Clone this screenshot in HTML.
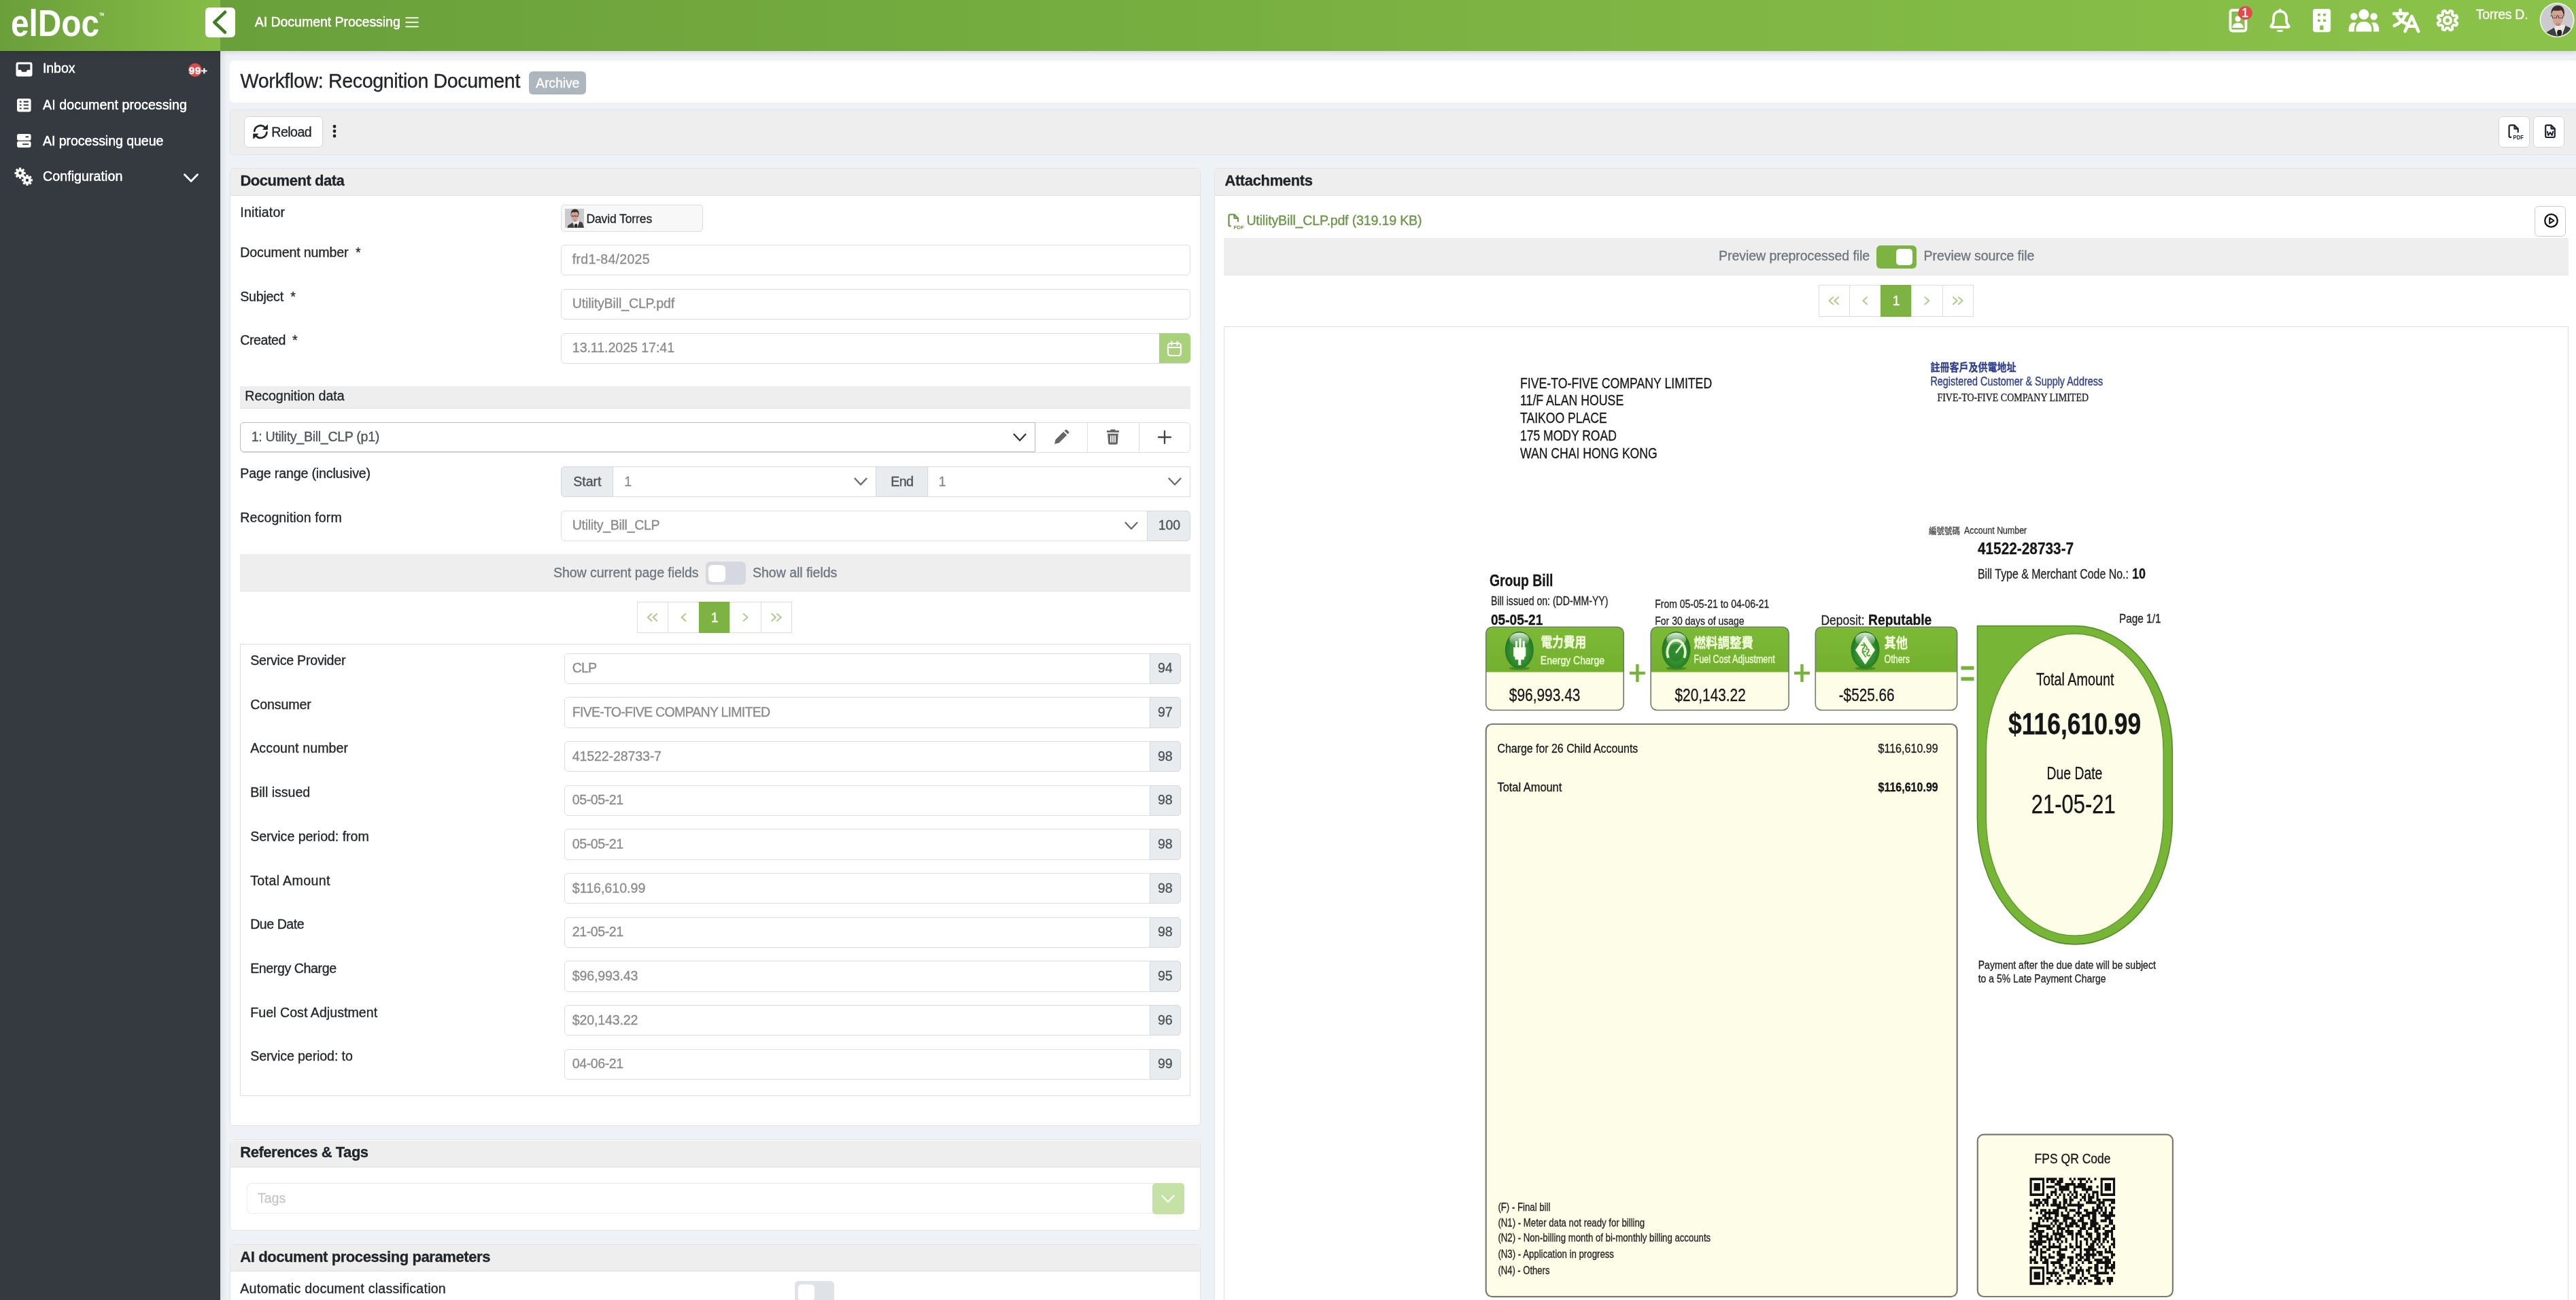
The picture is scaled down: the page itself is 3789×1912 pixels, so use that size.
<!DOCTYPE html>
<html lang="en"><head><meta charset="utf-8"><title>elDoc - Workflow: Recognition Document</title>
<style>
*{box-sizing:border-box;margin:0;padding:0}
html,body{width:3789px;height:1912px;overflow:hidden}
body{background:#eef2f7;will-change:transform;font-family:"Liberation Sans",sans-serif;color:#212529;position:relative}
div,span.t,span.lg,svg.a{position:absolute}
.t,.lg{white-space:nowrap;line-height:1}
.t{-webkit-text-stroke:.3px}
.card{background:#fff;border:1px solid #dfe3e8;border-radius:6px}
.ch{background:#eee;border-bottom:1px solid #ddd;border-radius:5px 5px 0 0}
.in{background:#fff;border:1px solid #ddd;border-radius:6px}
.ad{background:#e9ecef;border:1px solid #d4d8dc}
.bar{background:#eee;border-bottom:1px solid #e2e2e2}
.btn{background:#fff;border:1px solid #d5d5d5;border-radius:6px}
.pg{background:#fff;border:1px solid #ddd}
</style></head><body>

<div style="left:0.0px;top:75.0px;width:324.0px;height:1837.0px;background:#343a40;box-shadow:3px 0 8px rgba(0,0,0,.10)"></div>
<span class="t" id="t0" style="left:63.0px;top:91.3px;font-size:19.6px;color:#fff;letter-spacing:-0.108px;text-shadow:0 0 .6px #fff;">Inbox</span>
<span class="t" id="t1" style="left:63.0px;top:144.8px;font-size:19.6px;color:#fff;letter-spacing:0.082px;text-shadow:0 0 .6px #fff;">AI document processing</span>
<span class="t" id="t2" style="left:63.0px;top:197.6px;font-size:19.6px;color:#fff;letter-spacing:-0.071px;text-shadow:0 0 .6px #fff;">AI processing queue</span>
<span class="t" id="t3" style="left:63.0px;top:249.9px;font-size:19.6px;color:#fff;letter-spacing:0.064px;text-shadow:0 0 .6px #fff;">Configuration</span>
<svg class="a" style="left:23px;top:91px" width="25" height="22" viewBox="0 0 25 22"><path d="M3.5 0.5h18a3 3 0 0 1 3 3v15a3 3 0 0 1-3 3h-18a3 3 0 0 1-3-3v-15a3 3 0 0 1 3-3zM3.6 3.6v8.2h4.2l1.6 3h6.2l1.6-3h4.2V3.6z" fill="#fff" fill-rule="evenodd"/></svg>
<div style="left:276.5px;top:93.1px;width:20.0px;height:20.0px;background:#dc4c4c;border-radius:10px"></div>
<span class="t" id="t4" style="left:277.7px;top:96.2px;font-size:15.5px;font-weight:700;color:#fff;letter-spacing:0.468px;">99+</span>
<svg class="a" style="left:24.800px;top:145px" width="21" height="20" viewBox="0 0 21 20"><path d="M3 0h14.600a3 3 0 0 1 3 3v13.400a3 3 0 0 1-3 3H3a3 3 0 0 1-3-3V3a3 3 0 0 1 3-3zM3.700 3.600v2.100h2.900V3.600zm6 0v2.100h7.300V3.600zM3.700 8.500v2.100h2.900V8.500zm6 0v2.100h7.300V8.500zM3.700 13.500v2.100h2.900v-2.100zm6 0v2.100h7.300v-2.100z" fill="#fff" fill-rule="evenodd"/></svg>
<svg class="a" style="left:24.800px;top:196.800px" width="21" height="20" viewBox="0 0 21 20"><path d="M2.800 0h15a2.800 2.800 0 0 1 2.800 2.800v3.900a2.800 2.800 0 0 1-2.800 2.800h-15A2.800 2.800 0 0 1 0 6.700V2.800A2.800 2.800 0 0 1 2.800 0zM12.600 3.200v2.100H17V3.200zM2.800 10.800h15a2.800 2.800 0 0 1 2.800 2.800v3.500a2.800 2.800 0 0 1-2.800 2.800h-15A2.800 2.800 0 0 1 0 17.100v-3.500a2.800 2.800 0 0 1 2.800-2.800zM8.200 14.300V16H17v-1.700z" fill="#fff" fill-rule="evenodd"/></svg>
<svg class="a" style="left:20.800px;top:246px" width="28.500" height="28.500" viewBox="0 0 30 30"><g fill="#fff"><circle cx="9" cy="9" r="6.2"/><circle cx="20" cy="20" r="6.2"/><g stroke="#fff" stroke-width="3.4" stroke-linecap="butt"><path d="M9 0.500v17M0.500 9h17M3 3l12 12M15 3L3 15"/><path d="M20 11.500v17M11.500 20h17M14 14l12 12M26 14L14 26"/></g></g><circle cx="9" cy="9" r="2.400" fill="#343a40"/><circle cx="20" cy="20" r="2.400" fill="#343a40"/></svg>
<svg class="a" style="left:270px;top:255px" width="22" height="14" viewBox="0 0 22 14"><path d="M1.500 1.800L11 11.500 20.500 1.800" fill="none" stroke="#fff" stroke-width="2.800" stroke-linecap="round" stroke-linejoin="round"/></svg>
<div style="left:0.0px;top:0.0px;width:3789.0px;height:75.0px;background:linear-gradient(90deg,#6aa03a 324px,#8bc34a 3789px);box-shadow:0 2px 7px rgba(0,0,0,.13)"></div>
<div style="left:0.0px;top:0.0px;width:324.0px;height:75.0px;background:linear-gradient(90deg,#6a9f3a,#86bd47)"></div>
<span class="lg" style="left:15.5px;top:7.2px;font-size:55px;font-weight:700;color:#fff;transform:scaleX(.868);transform-origin:0 0">elDoc</span>
<span class="t" id="t5" style="left:146.5px;top:19.7px;font-size:4.5px;color:#e6f5d0;">TM</span>
<div style="left:302.0px;top:11.0px;width:44.0px;height:44.0px;background:#fff;border-radius:6px"></div>
<svg class="a" style="left:302px;top:11px" width="44" height="44" viewBox="0 0 44 44"><path d="M29 6.800L13.300 21.800 29 36.500" fill="none" stroke="#3f7d22" stroke-width="4.600" stroke-linecap="round" stroke-linejoin="round"/></svg>
<span class="t" id="t6" style="left:374.7px;top:23.1px;font-size:19.6px;color:#fff;letter-spacing:-0.070px;text-shadow:0 0 .5px #fff;">AI Document Processing</span>
<svg class="a" style="left:596px;top:24px" width="20" height="18" viewBox="0 0 20 18"><path d="M1.200 2.300h17.600M1.200 8.800h17.600M1.200 15.300h17.600" stroke="#f4ffe4" stroke-width="2" stroke-linecap="round"/></svg>
<svg class="a" style="left:3277px;top:12px" width="30" height="37" viewBox="0 0 30 37"><rect x="3.500" y="3" width="23" height="30.500" rx="3.200" fill="none" stroke="#fff" stroke-width="3.800"/><circle cx="14.700" cy="15.800" r="4.200" fill="#fff"/><path d="M6.500 29c0-4.800 3.400-7.300 8.200-7.300s8.200 2.500 8.200 7.300z" fill="#fff"/></svg>
<div style="left:3292.4px;top:8.6px;width:20.2px;height:20.2px;background:#e04a4a;border-radius:10.100px"></div>
<span class="t" id="t7" style="left:3297.3px;top:10.0px;font-size:18px;color:#fff;">1</span>
<svg class="a" style="left:3337px;top:12px" width="34" height="37" viewBox="0 0 34 37"><path d="M16.600 4.600c-6 0-9.600 4.400-9.600 10.500v4.500c0 2.500-1.300 4.300-3.300 6.300-.8.800-.3 2 .9 2h24c1.200 0 1.700-1.200.9-2-2-2-3.300-3.800-3.300-6.300v-4.500c0-6.100-3.600-10.500-9.600-10.500z" fill="none" stroke="#fff" stroke-width="3.600" stroke-linejoin="round"/><path d="M11.800 32.200h9.600a4.800 2.900 0 0 1-9.600 0z" fill="#fff"/><rect x="14.600" y="1" width="4" height="4.500" rx="2" fill="#fff"/></svg>
<svg class="a" style="left:3402.300px;top:13.100px" width="27" height="35" viewBox="0 0 27 35"><path d="M4 0h18.200a4 4 0 0 1 4 4v26.300a4 4 0 0 1-4 4H4a4 4 0 0 1-4-4V4a4 4 0 0 1 4-4zM7.100 7.100v3.500h3.600V7.100zm8 0v3.500h3.800V7.100zM7.100 15.400v3.600h3.600v-3.600zm8 0v3.600h3.800v-3.600zM10.200 31v-4.300a2.700 2.700 0 0 1 5.400 0V31z" fill="#fff" fill-rule="evenodd"/></svg>
<svg class="a" style="left:3454px;top:13px" width="46" height="34" viewBox="0 0 46 34"><g fill="#fff"><circle cx="22.900" cy="8.200" r="7.600"/><circle cx="8.300" cy="11.200" r="5.200"/><circle cx="37.600" cy="11.200" r="5.200"/><path d="M11.400 33.400v-3c0-7 4.800-11.600 11.500-11.600s11.500 4.600 11.500 11.600v3z"/><path d="M.7 33.400v-3.800c0-5.500 3.300-9.600 7.800-9.600 1.200 0 2.300.3 3.300.8-2 2.500-3 5.600-3 9.400v3.200zM45.200 33.400v-3.800c0-5.500-3.300-9.600-7.800-9.600-1.200 0-2.300.3-3.300.8 2 2.500 3 5.600 3 9.400v3.200z"/></g></svg>
<svg class="a" style="left:3518px;top:12px" width="42" height="37" viewBox="0 0 42 37"><g fill="none" stroke="#fff" stroke-width="4.700" stroke-linecap="round" stroke-linejoin="round"><path d="M3 8.100h20M12.600 2.800v5M20.100 10.100C17 17 11 23 3.800 25.800M7.900 11.700c3 5 8 9 14.200 11.500"/><path d="M19.600 34l9.800-22 9.800 22M23.500 26.600h12"/></g></svg>
<svg class="a" style="left:3582.400px;top:12px" width="36" height="36" viewBox="0 0 36 36"><g fill="none" stroke="#fff" stroke-linejoin="round"><path d="M31.9 23.7L31.6 24.3L31.4 24.8L31.1 25.3L30.0 25.3L28.8 25.2L27.7 25.0L26.6 24.8L26.4 25.1L26.1 25.5L25.8 25.8L25.5 26.1L25.1 26.4L24.8 26.6L25.0 27.7L25.2 28.8L25.3 30.0L25.3 31.1L24.8 31.4L24.3 31.6L23.7 31.9L23.2 32.1L22.6 32.3L22.1 32.4L21.3 31.7L20.5 30.8L19.9 29.8L19.3 28.9L18.9 29.0L18.4 29.0L18.0 29.0L17.6 29.0L17.1 29.0L16.7 28.9L16.1 29.8L15.5 30.8L14.7 31.7L13.9 32.4L13.4 32.3L12.8 32.1L12.3 31.9L11.7 31.6L11.2 31.4L10.7 31.1L10.7 30.0L10.8 28.8L11.0 27.7L11.2 26.6L10.9 26.4L10.5 26.1L10.2 25.8L9.9 25.5L9.6 25.1L9.4 24.8L8.3 25.0L7.2 25.2L6.0 25.3L4.9 25.3L4.6 24.8L4.4 24.3L4.1 23.7L3.9 23.2L3.7 22.6L3.6 22.1L4.3 21.3L5.2 20.5L6.2 19.9L7.1 19.3L7.0 18.9L7.0 18.4L7.0 18.0L7.0 17.6L7.0 17.1L7.1 16.7L6.2 16.1L5.2 15.5L4.3 14.7L3.6 13.9L3.7 13.4L3.9 12.8L4.1 12.3L4.4 11.7L4.6 11.2L4.9 10.7L6.0 10.7L7.2 10.8L8.3 11.0L9.4 11.2L9.6 10.9L9.9 10.5L10.2 10.2L10.5 9.9L10.9 9.6L11.2 9.4L11.0 8.3L10.8 7.2L10.7 6.0L10.7 4.9L11.2 4.6L11.7 4.4L12.3 4.1L12.8 3.9L13.4 3.7L13.9 3.6L14.7 4.3L15.5 5.2L16.1 6.2L16.7 7.1L17.1 7.0L17.6 7.0L18.0 7.0L18.4 7.0L18.9 7.0L19.3 7.1L19.9 6.2L20.5 5.2L21.3 4.3L22.1 3.6L22.6 3.7L23.2 3.9L23.7 4.1L24.3 4.4L24.8 4.6L25.3 4.9L25.3 6.0L25.2 7.2L25.0 8.3L24.8 9.4L25.1 9.6L25.5 9.9L25.8 10.2L26.1 10.5L26.4 10.9L26.6 11.2L27.7 11.0L28.8 10.8L30.0 10.7L31.1 10.7L31.4 11.2L31.6 11.7L31.9 12.3L32.1 12.8L32.3 13.4L32.4 13.9L31.7 14.7L30.8 15.5L29.8 16.1L28.9 16.7L29.0 17.1L29.0 17.6L29.0 18.0L29.0 18.4L29.0 18.9L28.9 19.3L29.8 19.9L30.8 20.5L31.7 21.3L32.4 22.1L32.3 22.6L32.1 23.2Z" stroke-width="3.800"/><circle cx="18" cy="18" r="5" stroke-width="4.200"/></g></svg>
<span class="t" id="t8" style="left:3641.7px;top:11.5px;font-size:19.6px;color:#fff;letter-spacing:-0.320px;">Torres D.</span>
<svg class="a" style="left:3735px;top:3px" width="52" height="53" viewBox="0 0 52 53"><defs><clipPath id="avc"><circle cx="26.100" cy="26.500" r="23.900"/></clipPath></defs><circle cx="26.100" cy="26.500" r="25.500" fill="#eefbe2"/><g clip-path="url(#avc)"><rect width="52" height="53" fill="#cbcbcf"/><path d="M8 53L10.500 44.500 22 37.500l5.500 3 10.500-6 7.500 3.500L50 53z" fill="#3f3f42"/><path d="M21.800 37.600L24 35l13-1.500 1.500 1.500L33 50h-7z" fill="#e9e8e4"/><path d="M27.500 41h4.500l1.300 3-1.300 9h-5l-1-9z" fill="#242426"/><path d="M18.500 17c0-6 4-9 9-9s8.500 3.500 8.500 9.500c0 3-.5 6-1.500 9-1.200 4-4 8.500-7.500 8.500-3 0-6-3.500-7.300-8-.8-3-1.200-6-1.200-10z" fill="#d3a493"/><path d="M24 30.500c2 1.500 5 1.500 7.500 0l-1 4.500h-5z" fill="#b98777"/><path d="M17.500 18.500c-1-8 3.500-13.500 9.500-13.500 6.500 0 10.500 4.500 10 12.500l-1 3c-.5-4.500-2-7.500-4-8.500-3.500 1-8 1-11.500.5-1.500 1.500-2.500 3.500-2.500 7z" fill="#38302d"/><path d="M16.500 19.700h20v1.300h-20zM19 20h7v3.800h-7zm9 0h7v3.800h-7z" fill="#2c2624" fill-opacity=".85" fill-rule="evenodd"/><path d="M20 21h5v2h-5zm9 0h5v2h-5z" fill="#c79c8c"/></g></svg>
<div style="left:338.2px;top:89.3px;width:3470.0px;height:61.6px;background:#fff;border-radius:7px"></div>
<span class="t" id="t9" style="left:353.6px;top:104.8px;font-size:28.6px;letter-spacing:-0.361px;">Workflow: Recognition Document</span>
<div style="left:778.0px;top:104.9px;width:83.7px;height:34.0px;background:#adb5bd;border-radius:6px"></div>
<span class="t" id="t10" style="left:788.1px;top:112.9px;font-size:19.6px;color:#fff;letter-spacing:-0.163px;">Archive</span>
<div style="left:338.0px;top:161.0px;width:3470.0px;height:66.5px;background:#eee;border:1px solid #e2e5e8;border-radius:6px"></div>
<div class="btn" style="left:359.0px;top:170.8px;width:116.0px;height:46.2px;"></div>
<svg class="a" style="left:371px;top:181.500px" width="24" height="24" viewBox="0 0 24 24"><g fill="none" stroke="#212529" stroke-width="2.700" stroke-linecap="round"><path d="M3.200 11A9.100 9.100 0 0 1 18.700 5.400"/><path d="M21.400 12.600A9.100 9.100 0 0 1 5.900 18.200"/></g><path d="M22.600 1.500v7h-7zM1.700 22.100v-7.200h7.200z" fill="#212529" stroke="#212529" stroke-width=".8" stroke-linejoin="round"/></svg>
<span class="t" id="t11" style="left:399.3px;top:185.1px;font-size:19.6px;letter-spacing:-0.549px;">Reload</span>
<svg class="a" style="left:487px;top:183px" width="10" height="20" viewBox="0 0 10 20"><g fill="#212529"><circle cx="5" cy="3" r="2.400"/><circle cx="5" cy="10" r="2.400"/><circle cx="5" cy="17" r="2.400"/></g></svg>
<div class="btn" style="left:3675.3px;top:171.0px;width:45.8px;height:46.0px;"></div>
<div class="btn" style="left:3726.2px;top:171.0px;width:46.0px;height:46.0px;"></div>
<svg class="a" style="left:3687px;top:181px" width="26" height="26" viewBox="0 0 26 26"><path d="M6.300 20.800h-1a1.700 1.700 0 0 1-1.700-1.700V4.900A1.700 1.700 0 0 1 5.300 3.200h6.200l5.200 5.200v4.800" fill="none" stroke="#1c2430" stroke-width="2.200" stroke-linejoin="round" stroke-linecap="round"/><path d="M11.500 3.200v5.200h5.200" fill="none" stroke="#1c2430" stroke-width="2.200" stroke-linejoin="round"/><text x="9.500" y="24.200" font-family="Liberation Sans,sans-serif" font-weight="700" font-size="8.800" fill="#1c2430" textLength="15.500" lengthAdjust="spacingAndGlyphs">PDF</text></svg>
<svg class="a" style="left:3738px;top:181px" width="24" height="26" viewBox="0 0 24 26"><path d="M8.200 3.200h6.400l5.200 5.200v10.600a2 2 0 0 1-2 2H8.200a2 2 0 0 1-2-2V5.200a2 2 0 0 1 2-2z" fill="none" stroke="#1c2430" stroke-width="2.200" stroke-linejoin="round"/><path d="M14.600 3.200v5.200h5.200" fill="none" stroke="#1c2430" stroke-width="2.200" stroke-linejoin="round"/><path d="M8.800 12.500l1.500 5.500 2.700-4.300 2.700 4.300 1.500-5.500" fill="none" stroke="#1c2430" stroke-width="2" stroke-linejoin="round" stroke-linecap="round"/></svg>
<div class="card" style="left:337.5px;top:246.9px;width:1428.8px;height:1409.4px;"></div>
<div class="ch" style="left:339.0px;top:248.4px;width:1425.8px;height:39.5px;"></div>
<span class="t" id="t12" style="left:353.4px;top:255.1px;font-size:22px;font-weight:700;letter-spacing:-0.456px;">Document data</span>
<span class="t" id="t13" style="left:353.3px;top:302.6px;font-size:19.6px;letter-spacing:0.193px;">Initiator</span>
<div style="left:825.2px;top:301.3px;width:209.3px;height:39.3px;background:#f8f8f8;border:1px solid #ddd;border-radius:5px"></div>
<svg class="a" style="left:831.100px;top:307.200px" width="27.800" height="27.500" viewBox="3 4 46 45.500" preserveAspectRatio="xMidYMid slice"><rect width="52" height="53" fill="#cbcbcf"/><path d="M8 53L10.500 44.500 22 37.500l5.500 3 10.500-6 7.500 3.500L50 53z" fill="#3f3f42"/><path d="M21.800 37.600L24 35l13-1.500 1.500 1.500L33 50h-7z" fill="#e9e8e4"/><path d="M27.500 41h4.500l1.300 3-1.300 9h-5l-1-9z" fill="#242426"/><path d="M18.500 17c0-6 4-9 9-9s8.500 3.500 8.500 9.500c0 3-.5 6-1.500 9-1.200 4-4 8.500-7.500 8.500-3 0-6-3.500-7.300-8-.8-3-1.200-6-1.200-10z" fill="#d3a493"/><path d="M24 30.500c2 1.500 5 1.500 7.500 0l-1 4.500h-5z" fill="#b98777"/><path d="M17.500 18.500c-1-8 3.500-13.500 9.500-13.500 6.500 0 10.500 4.500 10 12.500l-1 3c-.5-4.500-2-7.500-4-8.500-3.500 1-8 1-11.500.5-1.500 1.500-2.500 3.500-2.500 7z" fill="#38302d"/><path d="M16.500 19.700h20v1.300h-20zM19 20h7v3.800h-7zm9 0h7v3.800h-7z" fill="#2c2624" fill-opacity=".85" fill-rule="evenodd"/><path d="M20 21h5v2h-5zm9 0h5v2h-5z" fill="#c79c8c"/></svg>
<span class="t" id="t14" style="left:862.4px;top:314.3px;font-size:17.5px;letter-spacing:-0.102px;">David Torres</span>
<span class="t" id="t15" style="left:353.3px;top:361.5px;font-size:19.6px;letter-spacing:-0.139px;">Document number&nbsp;&nbsp;*</span>
<div class="in" style="left:824.7px;top:359.9px;width:926.5px;height:45.3px;"></div>
<span class="t" id="t16" style="left:841.8px;top:372.4px;font-size:19.6px;color:#8a8a8a;letter-spacing:0.248px;">frd1-84/2025</span>
<span class="t" id="t17" style="left:353.3px;top:426.5px;font-size:19.6px;letter-spacing:-0.258px;">Subject&nbsp;&nbsp;*</span>
<div class="in" style="left:824.7px;top:424.9px;width:926.5px;height:45.3px;"></div>
<span class="t" id="t18" style="left:841.8px;top:437.4px;font-size:19.6px;color:#8a8a8a;letter-spacing:-0.153px;">UtilityBill_CLP.pdf</span>
<span class="t" id="t19" style="left:353.3px;top:491.3px;font-size:19.6px;letter-spacing:-0.443px;">Created&nbsp;&nbsp;*</span>
<div class="in" style="left:824.7px;top:489.7px;width:926.5px;height:45.3px;"></div>
<span class="t" id="t20" style="left:841.8px;top:502.2px;font-size:19.6px;color:#8a8a8a;letter-spacing:-0.056px;">13.11.2025 17:41</span>
<div style="left:1704.5px;top:490.2px;width:46.2px;height:44.3px;background:#a9d17c;border-radius:0 6px 6px 0"></div>
<svg class="a" style="left:1716px;top:501px" width="23" height="24" viewBox="0 0 23 24"><g fill="none" stroke="#fff" stroke-width="2.200" stroke-linecap="round" stroke-linejoin="round"><rect x="2" y="4" width="19" height="18" rx="3.500"/><path d="M2.500 10h18M7.300 1.500v5M15.700 1.500v5"/></g></svg>
<div class="bar" style="left:353.2px;top:568.1px;width:1397.5px;height:32.6px;"></div>
<span class="t" id="t21" style="left:360.3px;top:573.0px;font-size:19.6px;letter-spacing:-0.054px;">Recognition data</span>
<div class="in" style="left:352.7px;top:620.8px;width:1398.5px;height:45.2px;border-color:#ddd"></div>
<div style="left:353.2px;top:621.3px;width:1169.7px;height:44.2px;border:1px solid #bdbdbd;border-radius:6px 0 0 6px;background:#fff"></div>
<span class="t" id="t22" style="left:369.7px;top:633.2px;font-size:19.6px;color:#4d525a;letter-spacing:-0.307px;">1: Utility_Bill_CLP (p1)</span>
<svg class="a" style="left:1489.5px;top:636.8px" width="20" height="13" viewBox="0 0 20 13"><path d="M1.500 1.800L10 10.800 18.500 1.800" fill="none" stroke="#333" stroke-width="2.300" stroke-linecap="round" stroke-linejoin="round"/></svg>
<div style="left:1598.9px;top:621.3px;width:1.0px;height:44.2px;background:#ddd"></div>
<div style="left:1675.0px;top:621.3px;width:1.0px;height:44.2px;background:#ddd"></div>
<svg class="a" style="left:1549px;top:631px" width="24" height="24" viewBox="0 0 24 24"><path d="M2 22l1.600-6.500L15.200 3.900l5 5L8.600 20.500zM16.600 2.500l1.100-1.100a2 2 0 0 1 2.800 0l2.200 2.200a2 2 0 0 1 0 2.800l-1.100 1.100z" fill="#666"/></svg>
<svg class="a" style="left:1627px;top:631px" width="20" height="23" viewBox="0 0 20 23"><path d="M7 0.500h6l1 1.800h5v2.700H1V2.300h5zM2.200 6.800h15.600l-.9 14.200a2 2 0 0 1-2 1.800H5.100a2 2 0 0 1-2-1.800zM6 9.500v10.300h1.800V9.500zm3.100 0v10.300h1.800V9.500zm3.100 0v10.300h1.800V9.500z" fill="#666" fill-rule="evenodd"/></svg>
<svg class="a" style="left:1703px;top:633px" width="20" height="20" viewBox="0 0 20 20"><path d="M10 1v18M1 10h18" stroke="#444" stroke-width="2.300" stroke-linecap="round"/></svg>
<span class="t" id="t23" style="left:353.3px;top:687.4px;font-size:19.6px;letter-spacing:-0.148px;">Page range (inclusive)</span>
<div class="in" style="left:824.7px;top:685.8px;width:926.5px;height:45.2px;border-radius:6px 0 0 6px"></div>
<div class="ad" style="left:824.7px;top:685.8px;width:77.4px;height:45.3px;border-radius:6px 0 0 6px"></div>
<span class="t" id="t24" style="left:843.2px;top:698.5px;font-size:19.6px;color:#495057;">Start</span>
<span class="t" id="t25" style="left:918.2px;top:698.5px;font-size:19.6px;color:#8a8a8a;">1</span>
<svg class="a" style="left:1255.5px;top:702.0px" width="20" height="13" viewBox="0 0 20 13"><path d="M1.500 1.800L10 10.800 18.500 1.800" fill="none" stroke="#6a6a6a" stroke-width="2.300" stroke-linecap="round" stroke-linejoin="round"/></svg>
<div class="ad" style="left:1287.8px;top:685.8px;width:77.1px;height:45.3px;"></div>
<span class="t" id="t26" style="left:1310.3px;top:698.5px;font-size:19.6px;color:#495057;letter-spacing:-0.625px;">End</span>
<span class="t" id="t27" style="left:1380.6px;top:698.5px;font-size:19.6px;color:#8a8a8a;">1</span>
<svg class="a" style="left:1717.5px;top:702.0px" width="20" height="13" viewBox="0 0 20 13"><path d="M1.500 1.800L10 10.800 18.500 1.800" fill="none" stroke="#6a6a6a" stroke-width="2.300" stroke-linecap="round" stroke-linejoin="round"/></svg>
<span class="t" id="t28" style="left:353.3px;top:752.0px;font-size:19.6px;letter-spacing:0.086px;">Recognition form</span>
<div class="in" style="left:824.7px;top:750.8px;width:926.5px;height:45.2px;"></div>
<span class="t" id="t29" style="left:841.8px;top:762.6px;font-size:19.6px;color:#8a8a8a;letter-spacing:-0.340px;">Utility_Bill_CLP</span>
<svg class="a" style="left:1653.8px;top:767.0px" width="20" height="13" viewBox="0 0 20 13"><path d="M1.500 1.800L10 10.800 18.500 1.800" fill="none" stroke="#6a6a6a" stroke-width="2.300" stroke-linecap="round" stroke-linejoin="round"/></svg>
<div class="ad" style="left:1686.6px;top:750.8px;width:64.6px;height:45.2px;border-radius:0 6px 6px 0"></div>
<span class="t" id="t30" style="left:1703.8px;top:762.6px;font-size:19.6px;color:#495057;letter-spacing:-0.201px;">100</span>
<div class="bar" style="left:353.2px;top:815.1px;width:1397.5px;height:54.7px;"></div>
<span class="t" id="t31" style="left:814.0px;top:832.8px;font-size:19.6px;color:#6c757d;letter-spacing:-0.090px;">Show current page fields</span>
<div style="left:1038.1px;top:826.3px;width:58.9px;height:33.5px;background:#d5d9df;border-radius:6px"></div>
<div style="left:1041.7px;top:830.7px;width:25.4px;height:25.4px;background:#fff;border-radius:6px"></div>
<span class="t" id="t32" style="left:1107.0px;top:832.8px;font-size:19.6px;color:#6c757d;letter-spacing:-0.063px;">Show all fields</span>
<div style="left:936.8px;top:884.7px;width:46.5px;height:46.5px;background:#fff;border:1px solid #ddd"></div>
<div style="left:982.3px;top:884.7px;width:46.5px;height:46.5px;background:#fff;border:1px solid #ddd"></div>
<div style="left:1027.8px;top:884.7px;width:46.5px;height:46.5px;background:#7cb342;border:1px solid #7cb342"></div>
<div style="left:1073.3px;top:884.7px;width:46.5px;height:46.5px;background:#fff;border:1px solid #ddd"></div>
<div style="left:1118.8px;top:884.7px;width:46.5px;height:46.5px;background:#fff;border:1px solid #ddd"></div>
<svg class="a" style="left:0;top:0" width="3789" height="1912"><path d="M958.5 902.8L952.8 908.0L958.5 913.2M966.3 902.8L960.5 908.0L966.3 913.2M1008.4 902.8L1002.6 908.0L1008.4 913.2M1093.6 902.8L1099.5 908.0L1093.6 913.2M1135.1 902.8L1141.0 908.0L1135.1 913.2M1142.9 902.8L1148.8 908.0L1142.9 913.2" fill="none" stroke="#abcb86" stroke-width="1.900" stroke-linecap="round" stroke-linejoin="round"/></svg>
<span class="t" id="t33" style="left:1045.8px;top:899.0px;font-size:19.6px;color:#fff;">1</span>
<div style="left:353.2px;top:946.5px;width:1397.5px;height:665.0px;border:1px solid #ddd;background:#fff"></div>
<span class="t" id="t34" style="left:368.2px;top:962.1px;font-size:19.6px;letter-spacing:-0.234px;">Service Provider</span>
<div class="in" style="left:829.8px;top:960.7px;width:907.3px;height:45.4px;"></div>
<span class="t" id="t35" style="left:841.8px;top:973.3px;font-size:19.6px;color:#8a8a8a;letter-spacing:-0.875px;">CLP</span>
<div class="ad" style="left:1690.7px;top:960.7px;width:46.4px;height:45.4px;border-radius:0 6px 6px 0"></div>
<span class="t" id="t36" style="left:1703.0px;top:973.3px;font-size:19.6px;color:#495057;letter-spacing:-0.198px;">94</span>
<span class="t" id="t37" style="left:368.2px;top:1026.8px;font-size:19.6px;letter-spacing:-0.111px;">Consumer</span>
<div class="in" style="left:829.8px;top:1025.4px;width:907.3px;height:45.4px;"></div>
<span class="t" id="t38" style="left:841.8px;top:1038.0px;font-size:19.6px;color:#8a8a8a;letter-spacing:-0.784px;">FIVE-TO-FIVE COMPANY LIMITED</span>
<div class="ad" style="left:1690.7px;top:1025.4px;width:46.4px;height:45.4px;border-radius:0 6px 6px 0"></div>
<span class="t" id="t39" style="left:1703.0px;top:1038.0px;font-size:19.6px;color:#495057;letter-spacing:-0.198px;">97</span>
<span class="t" id="t40" style="left:368.2px;top:1091.4px;font-size:19.6px;letter-spacing:0.094px;">Account number</span>
<div class="in" style="left:829.8px;top:1090.0px;width:907.3px;height:45.4px;"></div>
<span class="t" id="t41" style="left:841.8px;top:1102.6px;font-size:19.6px;color:#8a8a8a;letter-spacing:-0.148px;">41522-28733-7</span>
<div class="ad" style="left:1690.7px;top:1090.0px;width:46.4px;height:45.4px;border-radius:0 6px 6px 0"></div>
<span class="t" id="t42" style="left:1703.0px;top:1102.6px;font-size:19.6px;color:#495057;letter-spacing:-0.198px;">98</span>
<span class="t" id="t43" style="left:368.2px;top:1156.1px;font-size:19.6px;letter-spacing:-0.020px;">Bill issued</span>
<div class="in" style="left:829.8px;top:1154.7px;width:907.3px;height:45.4px;"></div>
<span class="t" id="t44" style="left:841.8px;top:1167.3px;font-size:19.6px;color:#8a8a8a;letter-spacing:-0.430px;">05-05-21</span>
<div class="ad" style="left:1690.7px;top:1154.7px;width:46.4px;height:45.4px;border-radius:0 6px 6px 0"></div>
<span class="t" id="t45" style="left:1703.0px;top:1167.3px;font-size:19.6px;color:#495057;letter-spacing:-0.198px;">98</span>
<span class="t" id="t46" style="left:368.2px;top:1220.8px;font-size:19.6px;letter-spacing:-0.041px;">Service period: from</span>
<div class="in" style="left:829.8px;top:1219.4px;width:907.3px;height:45.4px;"></div>
<span class="t" id="t47" style="left:841.8px;top:1232.0px;font-size:19.6px;color:#8a8a8a;letter-spacing:-0.430px;">05-05-21</span>
<div class="ad" style="left:1690.7px;top:1219.4px;width:46.4px;height:45.4px;border-radius:0 6px 6px 0"></div>
<span class="t" id="t48" style="left:1703.0px;top:1232.0px;font-size:19.6px;color:#495057;letter-spacing:-0.198px;">98</span>
<span class="t" id="t49" style="left:368.2px;top:1285.5px;font-size:19.6px;letter-spacing:0.352px;">Total Amount</span>
<div class="in" style="left:829.8px;top:1284.1px;width:907.3px;height:45.4px;"></div>
<span class="t" id="t50" style="left:841.8px;top:1296.7px;font-size:19.6px;color:#8a8a8a;">$116,610.99</span>
<div class="ad" style="left:1690.7px;top:1284.1px;width:46.4px;height:45.4px;border-radius:0 6px 6px 0"></div>
<span class="t" id="t51" style="left:1703.0px;top:1296.7px;font-size:19.6px;color:#495057;letter-spacing:-0.198px;">98</span>
<span class="t" id="t52" style="left:368.2px;top:1350.1px;font-size:19.6px;letter-spacing:-0.473px;">Due Date</span>
<div class="in" style="left:829.8px;top:1348.7px;width:907.3px;height:45.4px;"></div>
<span class="t" id="t53" style="left:841.8px;top:1361.3px;font-size:19.6px;color:#8a8a8a;letter-spacing:-0.430px;">21-05-21</span>
<div class="ad" style="left:1690.7px;top:1348.7px;width:46.4px;height:45.4px;border-radius:0 6px 6px 0"></div>
<span class="t" id="t54" style="left:1703.0px;top:1361.3px;font-size:19.6px;color:#495057;letter-spacing:-0.198px;">98</span>
<span class="t" id="t55" style="left:368.2px;top:1414.8px;font-size:19.6px;letter-spacing:-0.407px;">Energy Charge</span>
<div class="in" style="left:829.8px;top:1413.4px;width:907.3px;height:45.4px;"></div>
<span class="t" id="t56" style="left:841.8px;top:1426.0px;font-size:19.6px;color:#8a8a8a;letter-spacing:-0.158px;">$96,993.43</span>
<div class="ad" style="left:1690.7px;top:1413.4px;width:46.4px;height:45.4px;border-radius:0 6px 6px 0"></div>
<span class="t" id="t57" style="left:1703.0px;top:1426.0px;font-size:19.6px;color:#495057;letter-spacing:-0.198px;">95</span>
<span class="t" id="t58" style="left:368.2px;top:1479.5px;font-size:19.6px;letter-spacing:0.038px;">Fuel Cost Adjustment</span>
<div class="in" style="left:829.8px;top:1478.1px;width:907.3px;height:45.4px;"></div>
<span class="t" id="t59" style="left:841.8px;top:1490.7px;font-size:19.6px;color:#8a8a8a;letter-spacing:-0.158px;">$20,143.22</span>
<div class="ad" style="left:1690.7px;top:1478.1px;width:46.4px;height:45.4px;border-radius:0 6px 6px 0"></div>
<span class="t" id="t60" style="left:1703.0px;top:1490.7px;font-size:19.6px;color:#495057;letter-spacing:-0.198px;">96</span>
<span class="t" id="t61" style="left:368.2px;top:1544.1px;font-size:19.6px;letter-spacing:-0.110px;">Service period: to</span>
<div class="in" style="left:829.8px;top:1542.7px;width:907.3px;height:45.4px;"></div>
<span class="t" id="t62" style="left:841.8px;top:1555.3px;font-size:19.6px;color:#8a8a8a;letter-spacing:-0.430px;">04-06-21</span>
<div class="ad" style="left:1690.7px;top:1542.7px;width:46.4px;height:45.4px;border-radius:0 6px 6px 0"></div>
<span class="t" id="t63" style="left:1703.0px;top:1555.3px;font-size:19.6px;color:#495057;letter-spacing:-0.198px;">99</span>
<div class="card" style="left:337.5px;top:1676.0px;width:1428.8px;height:134.0px;"></div>
<div class="ch" style="left:339.0px;top:1677.5px;width:1425.8px;height:39.0px;"></div>
<span class="t" id="t64" style="left:353.3px;top:1684.0px;font-size:22px;font-weight:700;letter-spacing:-0.480px;">References &amp; Tags</span>
<div style="left:363.2px;top:1740.3px;width:1378.6px;height:44.5px;background:#fff;border:1px solid #ebebeb;border-radius:6px"></div>
<span class="t" id="t65" style="left:379.0px;top:1752.7px;font-size:19.6px;color:#c6c6c6;letter-spacing:-0.048px;">Tags</span>
<div style="left:1694.5px;top:1740.0px;width:47.3px;height:45.8px;background:#c5e1a5;border-radius:5px"></div>
<svg class="a" style="left:1708.0px;top:1757.0px" width="20" height="13" viewBox="0 0 20 13"><path d="M1.500 1.800L10 10.800 18.500 1.800" fill="none" stroke="#fff" stroke-width="2.300" stroke-linecap="round" stroke-linejoin="round"/></svg>
<div class="card" style="left:337.5px;top:1829.9px;width:1428.8px;height:121.0px;"></div>
<div class="ch" style="left:339.0px;top:1831.4px;width:1425.8px;height:38.5px;"></div>
<span class="t" id="t66" style="left:353.3px;top:1838.0px;font-size:22px;font-weight:700;letter-spacing:-0.417px;">AI document processing parameters</span>
<span class="t" id="t67" style="left:353.3px;top:1886.0px;font-size:19.6px;letter-spacing:0.229px;">Automatic document classification</span>
<div style="left:1169.3px;top:1884.0px;width:57.7px;height:34.0px;background:#dfe2e6;border-radius:6px"></div>
<div style="left:1173.6px;top:1889.2px;width:24.0px;height:24.0px;background:#fff;border-radius:5px"></div>
<div class="card" style="left:1785.5px;top:246.9px;width:2031.0px;height:1701.0px;"></div>
<div class="ch" style="left:1787.0px;top:248.4px;width:2028.0px;height:39.5px;"></div>
<span class="t" id="t68" style="left:1801.4px;top:255.1px;font-size:22px;font-weight:700;letter-spacing:-0.368px;">Attachments</span>
<svg class="a" style="left:1806.300px;top:314.200px" width="25" height="24" viewBox="0 0 25 24"><path d="M4 18.500h-.8A1.700 1.700 0 0 1 1.500 16.800V3.200A1.700 1.700 0 0 1 3.200 1.500h6.300l5.500 5.500v4.500" fill="none" stroke="#6a9446" stroke-width="2.200" stroke-linejoin="round" stroke-linecap="round"/><path d="M9.500 1.500V7H15" fill="none" stroke="#6a9446" stroke-width="2.200" stroke-linejoin="round"/><text x="8.500" y="23" font-family="Liberation Sans,sans-serif" font-weight="700" font-size="8" fill="#6a9446" textLength="15" lengthAdjust="spacingAndGlyphs">PDF</text></svg>
<span class="t" id="t69" style="left:1833.4px;top:315.1px;font-size:19.6px;color:#6a9446;letter-spacing:-0.168px;">UtilityBill_CLP.pdf (319.19 KB)</span>
<div class="btn" style="left:3728.1px;top:303.0px;width:46.0px;height:45.0px;border-color:#ccc"></div>
<svg class="a" style="left:3741.200px;top:312.700px" width="23" height="23" viewBox="0 0 23 23"><circle cx="11.500" cy="11.500" r="9.300" fill="none" stroke="#111" stroke-width="2.300"/><path d="M9.200 7.300l6.300 4.200-6.300 4.200z" fill="none" stroke="#111" stroke-width="2" stroke-linejoin="round"/></svg>
<div class="bar" style="left:1800.3px;top:350.3px;width:1977.4px;height:54.7px;"></div>
<span class="t" id="t70" style="left:2528.1px;top:367.2px;font-size:19.6px;color:#6c757d;letter-spacing:-0.094px;">Preview preprocessed file</span>
<div style="left:2760.0px;top:361.1px;width:59.1px;height:33.6px;background:#7cb342;border-radius:6px"></div>
<div style="left:2788.8px;top:365.6px;width:24.6px;height:24.0px;background:#fff;border-radius:5px"></div>
<span class="t" id="t71" style="left:2829.5px;top:367.2px;font-size:19.6px;color:#6c757d;letter-spacing:-0.086px;">Preview source file</span>
<div style="left:2674.6px;top:418.9px;width:46.5px;height:46.8px;background:#fff;border:1px solid #ddd"></div>
<div style="left:2720.1px;top:418.9px;width:46.5px;height:46.8px;background:#fff;border:1px solid #ddd"></div>
<div style="left:2765.6px;top:418.9px;width:46.5px;height:46.8px;background:#7cb342;border:1px solid #7cb342"></div>
<div style="left:2811.1px;top:418.9px;width:46.5px;height:46.8px;background:#fff;border:1px solid #ddd"></div>
<div style="left:2856.6px;top:418.9px;width:46.5px;height:46.8px;background:#fff;border:1px solid #ddd"></div>
<svg class="a" style="left:0;top:0" width="3789" height="1912"><path d="M2696.3 437.1L2690.5 442.3L2696.3 447.5M2704.2 437.1L2698.3 442.3L2704.2 447.5M2746.2 437.1L2740.4 442.3L2746.2 447.5M2831.4 437.1L2837.2 442.3L2831.4 447.5M2872.9 437.1L2878.8 442.3L2872.9 447.5M2880.8 437.1L2886.6 442.3L2880.8 447.5" fill="none" stroke="#abcb86" stroke-width="1.900" stroke-linecap="round" stroke-linejoin="round"/></svg>
<span class="t" id="t72" style="left:2783.7px;top:433.3px;font-size:19.6px;color:#fff;">1</span>
<div style="left:1800.4px;top:480.4px;width:1977.4px;height:1500.0px;background:#fff;border:1px solid #ddd"></div>
<svg class="a" style="left:0;top:0" width="3789" height="1912" viewBox="0 0 3789 1912"><text x="2236.0" y="570.5" font-size="21.6" fill="#161616" font-family="Liberation Sans, sans-serif" textLength="282.2" lengthAdjust="spacingAndGlyphs" stroke="#161616" stroke-width=".3">FIVE-TO-FIVE COMPANY LIMITED</text>
<text x="2236.0" y="596.2" font-size="21.6" fill="#161616" font-family="Liberation Sans, sans-serif" textLength="152.2" lengthAdjust="spacingAndGlyphs" stroke="#161616" stroke-width=".3">11/F ALAN HOUSE</text>
<text x="2236.0" y="622.0" font-size="21.6" fill="#161616" font-family="Liberation Sans, sans-serif" textLength="127.8" lengthAdjust="spacingAndGlyphs" stroke="#161616" stroke-width=".3">TAIKOO PLACE</text>
<text x="2236.0" y="647.8" font-size="21.6" fill="#161616" font-family="Liberation Sans, sans-serif" textLength="141.8" lengthAdjust="spacingAndGlyphs" stroke="#161616" stroke-width=".3">175 MODY ROAD</text>
<text x="2236.0" y="673.5" font-size="21.6" fill="#161616" font-family="Liberation Sans, sans-serif" textLength="201.7" lengthAdjust="spacingAndGlyphs" stroke="#161616" stroke-width=".3">WAN CHAI HONG KONG</text>
<text x="2839.4" y="546.3" font-size="15.5" fill="#2f3f8f" font-family="Liberation Sans, Noto Sans CJK TC, sans-serif" textLength="126.0" lengthAdjust="spacingAndGlyphs" font-weight="700" stroke="#2f3f8f" stroke-width=".3">註冊客戶及供電地址</text>
<text x="2839.4" y="566.8" font-size="17.5" fill="#2f3f8f" font-family="Liberation Sans, sans-serif" textLength="253.7" lengthAdjust="spacingAndGlyphs" stroke="#2f3f8f" stroke-width=".35">Registered Customer &amp; Supply Address</text>
<text x="2849.4" y="590.0" font-size="16.6" fill="#222" font-family="Liberation Serif, serif" textLength="222.7" lengthAdjust="spacingAndGlyphs" stroke="#222" stroke-width=".3">FIVE-TO-FIVE COMPANY LIMITED</text>
<text x="2837.0" y="785.2" font-size="13" fill="#444" font-family="Liberation Sans, Noto Sans CJK TC, sans-serif" textLength="46.0" lengthAdjust="spacingAndGlyphs" stroke="#444" stroke-width=".3">編號號碼</text>
<text x="2889.0" y="785.2" font-size="14.5" fill="#333" font-family="Liberation Sans, sans-serif" textLength="92.2" lengthAdjust="spacingAndGlyphs" stroke="#333" stroke-width=".3">Account Number</text>
<text x="2908.9" y="815.4" font-size="24.3" fill="#161616" font-family="Liberation Sans, sans-serif" textLength="141.3" lengthAdjust="spacingAndGlyphs" font-weight="700" stroke="#161616" stroke-width=".3">41522-28733-7</text>
<text x="2908.9" y="851.0" font-size="20.5" fill="#222" font-family="Liberation Sans, sans-serif" textLength="222.0" lengthAdjust="spacingAndGlyphs" stroke="#222" stroke-width=".3">Bill Type &amp; Merchant Code No.:</text>
<text x="3136.0" y="851.0" font-size="22.5" fill="#161616" font-family="Liberation Sans, sans-serif" textLength="20.0" lengthAdjust="spacingAndGlyphs" font-weight="700" stroke="#161616" stroke-width=".3">10</text>
<text x="2190.9" y="861.9" font-size="23.5" fill="#161616" font-family="Liberation Sans, sans-serif" textLength="93.5" lengthAdjust="spacingAndGlyphs" font-weight="700" stroke="#161616" stroke-width=".3">Group Bill</text>
<text x="2193.0" y="889.8" font-size="17.5" fill="#222" font-family="Liberation Sans, sans-serif" textLength="172.4" lengthAdjust="spacingAndGlyphs" stroke="#222" stroke-width=".3">Bill issued on: (DD-MM-YY)</text>
<text x="2193.0" y="918.7" font-size="22" fill="#161616" font-family="Liberation Sans, sans-serif" textLength="76.3" lengthAdjust="spacingAndGlyphs" font-weight="700" stroke="#161616" stroke-width=".3">05-05-21</text>
<text x="2434.3" y="893.8" font-size="17.2" fill="#222" font-family="Liberation Sans, sans-serif" textLength="167.9" lengthAdjust="spacingAndGlyphs" stroke="#222" stroke-width=".3">From 05-05-21 to 04-06-21</text>
<text x="2434.3" y="918.9" font-size="17.2" fill="#222" font-family="Liberation Sans, sans-serif" textLength="131.3" lengthAdjust="spacingAndGlyphs" stroke="#222" stroke-width=".3">For 30 days of usage</text>
<text x="2678.5" y="918.7" font-size="20.5" fill="#222" font-family="Liberation Sans, sans-serif" textLength="64.0" lengthAdjust="spacingAndGlyphs" stroke="#222" stroke-width=".3">Deposit:</text>
<text x="2748.0" y="918.7" font-size="22" fill="#161616" font-family="Liberation Sans, sans-serif" textLength="93.3" lengthAdjust="spacingAndGlyphs" font-weight="700" stroke="#161616" stroke-width=".3">Reputable</text>
<text x="3116.9" y="915.7" font-size="18.5" fill="#222" font-family="Liberation Sans, sans-serif" textLength="61.6" lengthAdjust="spacingAndGlyphs" stroke="#222" stroke-width=".3">Page 1/1</text>
<defs><linearGradient id="gh" x1="0" y1="0" x2="0" y2="1"><stop offset="0" stop-color="#7cba36"/><stop offset="1" stop-color="#72b02e"/></linearGradient><radialGradient id="gs" cx=".5" cy=".55" r=".6"><stop offset="0" stop-color="#4fa83a"/><stop offset=".6" stop-color="#2f8a2c"/><stop offset="1" stop-color="#1f6a1c"/></radialGradient><linearGradient id="gl" x1="0" y1="0" x2="0" y2="1"><stop offset="0" stop-color="#fff" stop-opacity=".85"/><stop offset="1" stop-color="#fff" stop-opacity="0"/></linearGradient></defs>
<rect x="2185.7" y="922.2" width="202.5" height="122.3" rx="9" fill="#fdfde8"/>
<path d="M2185.7 988.5V931.2a9 9 0 0 1 9 -9H2379.2a9 9 0 0 1 9 9V988.5z" fill="url(#gh)"/>
<rect x="2185.7" y="922.2" width="202.5" height="122.3" rx="9" fill="none" stroke="#6f7a68" stroke-width="1.600"/>
<rect x="2428.2" y="922.2" width="202.9" height="122.3" rx="9" fill="#fdfde8"/>
<path d="M2428.2 988.5V931.2a9 9 0 0 1 9 -9H2622.1a9 9 0 0 1 9 9V988.5z" fill="url(#gh)"/>
<rect x="2428.2" y="922.2" width="202.9" height="122.3" rx="9" fill="none" stroke="#6f7a68" stroke-width="1.600"/>
<rect x="2670.3" y="922.2" width="208.4" height="122.3" rx="9" fill="#fdfde8"/>
<path d="M2670.3 988.5V931.2a9 9 0 0 1 9 -9H2869.7a9 9 0 0 1 9 9V988.5z" fill="url(#gh)"/>
<rect x="2670.3" y="922.2" width="208.4" height="122.3" rx="9" fill="none" stroke="#6f7a68" stroke-width="1.600"/>
<rect x="2185.700" y="1065" width="693" height="842.200" rx="9" fill="#fdfde8" stroke="#7a7a70" stroke-width="2.200"/>
<path d="M2408.4 977v26M2396.9 990h23" stroke="#78b23c" stroke-width="4.400"/>
<path d="M2650.5 977v26M2639.0 990h23" stroke="#78b23c" stroke-width="4.400"/>
<path d="M2884.500 982.500h19M2884.500 998.500h19" stroke="#78b23c" stroke-width="5.500"/>
<ellipse cx="2234.8" cy="983.0" rx="15" ry="2.600" fill="#2c6a16" opacity=".55"/>
<ellipse cx="2234.8" cy="956.0" rx="21" ry="27.300" fill="url(#gs)"/>
<ellipse cx="2234.8" cy="940.5" rx="14.500" ry="10" fill="url(#gl)"/>
<ellipse cx="2465.5" cy="983.0" rx="15" ry="2.600" fill="#2c6a16" opacity=".55"/>
<ellipse cx="2465.5" cy="956.0" rx="21" ry="27.300" fill="url(#gs)"/>
<ellipse cx="2465.5" cy="940.5" rx="14.500" ry="10" fill="url(#gl)"/>
<ellipse cx="2743.5" cy="983.0" rx="15" ry="2.600" fill="#2c6a16" opacity=".55"/>
<ellipse cx="2743.5" cy="956.0" rx="21" ry="27.300" fill="url(#gs)"/>
<ellipse cx="2743.5" cy="940.5" rx="14.500" ry="10" fill="url(#gl)"/>
<g fill="#fbfff0"><rect x="2228.900" y="942.700" width="3.100" height="10"/><rect x="2234.400" y="939.200" width="3.100" height="13"/><rect x="2239.600" y="942.700" width="3.100" height="10"/><path d="M2226.200 952h18.100v12.500l-2.300 2.700v3h-4.800v8h-3.900v-8h-4.800v-3l-2.300-2.700z"/></g>
<ellipse cx="2465.500" cy="960" rx="10" ry="13" fill="#1f7a2a" opacity=".55"/><g fill="none" stroke="#e9ffd0" stroke-linecap="butt"><path d="M2454 967.500a13.200 17.500 0 1 1 23.200 0" stroke-width="3.600"/><path d="M2465.700 959.500l10-13.500" stroke-width="2.600" stroke-linecap="round"/></g>
<g><path d="M2743.500 934.500l14.500 21.500-14.500 21.500-14.500-21.500z" fill="#f4ffe6"/><path d="M2737.500 949.500c3.500-3 7 1 3.500 4s0 7 3.500 4M2744 955.500c3.500-3 7 1 3.500 4s0 7 3.500 4M2741 945l5.500 8M2739 958.500l5.500 8" fill="none" stroke="#4d9a2c" stroke-width="1.700"/></g>
<text x="2266.4" y="952.3" font-size="20" fill="#f4ffe0" font-family="Liberation Sans, Noto Sans CJK TC, sans-serif" textLength="66.9" lengthAdjust="spacingAndGlyphs" font-weight="700" stroke="#f4ffe0" stroke-width=".3">電力費用</text>
<text x="2265.8" y="977.0" font-size="17" fill="#efffd4" font-family="Liberation Sans, sans-serif" textLength="94.3" lengthAdjust="spacingAndGlyphs" stroke="#efffd4" stroke-width=".4">Energy Charge</text>
<text x="2491.5" y="953.3" font-size="20" fill="#f4ffe0" font-family="Liberation Sans, Noto Sans CJK TC, sans-serif" textLength="87.5" lengthAdjust="spacingAndGlyphs" font-weight="700" stroke="#f4ffe0" stroke-width=".3">燃料調整費</text>
<text x="2491.5" y="975.2" font-size="16" fill="#efffd4" font-family="Liberation Sans, sans-serif" textLength="119.3" lengthAdjust="spacingAndGlyphs" stroke="#efffd4" stroke-width=".4">Fuel Cost Adjustment</text>
<text x="2771.5" y="953.3" font-size="20" fill="#f4ffe0" font-family="Liberation Sans, Noto Sans CJK TC, sans-serif" textLength="34.5" lengthAdjust="spacingAndGlyphs" font-weight="700" stroke="#f4ffe0" stroke-width=".3">其他</text>
<text x="2771.5" y="975.2" font-size="16" fill="#efffd4" font-family="Liberation Sans, sans-serif" textLength="37.5" lengthAdjust="spacingAndGlyphs" stroke="#efffd4" stroke-width=".4">Others</text>
<text x="2219.8" y="1030.7" font-size="25.5" fill="#161616" font-family="Liberation Sans, sans-serif" textLength="104.6" lengthAdjust="spacingAndGlyphs" stroke="#161616" stroke-width=".3">$96,993.43</text>
<text x="2463.5" y="1030.7" font-size="25.5" fill="#161616" font-family="Liberation Sans, sans-serif" textLength="104.3" lengthAdjust="spacingAndGlyphs" stroke="#161616" stroke-width=".3">$20,143.22</text>
<text x="2704.7" y="1030.7" font-size="25.5" fill="#161616" font-family="Liberation Sans, sans-serif" textLength="81.9" lengthAdjust="spacingAndGlyphs" stroke="#161616" stroke-width=".3">-$525.66</text>
<text x="2202.5" y="1106.8" font-size="17.5" fill="#161616" font-family="Liberation Sans, sans-serif" textLength="206.8" lengthAdjust="spacingAndGlyphs" stroke="#161616" stroke-width=".3">Charge for 26 Child Accounts</text>
<text x="2762.5" y="1106.8" font-size="17.5" fill="#161616" font-family="Liberation Sans, sans-serif" textLength="88.2" lengthAdjust="spacingAndGlyphs" stroke="#161616" stroke-width=".3">$116,610.99</text>
<text x="2202.5" y="1163.6" font-size="17.5" fill="#161616" font-family="Liberation Sans, sans-serif" textLength="94.8" lengthAdjust="spacingAndGlyphs" stroke="#161616" stroke-width=".3">Total Amount</text>
<text x="2762.5" y="1163.6" font-size="17.5" fill="#161616" font-family="Liberation Sans, sans-serif" textLength="88.2" lengthAdjust="spacingAndGlyphs" font-weight="700" stroke="#161616" stroke-width=".3">$116,610.99</text>
<text x="2203.4" y="1781.0" font-size="16.8" fill="#222" font-family="Liberation Sans, sans-serif" textLength="77.0" lengthAdjust="spacingAndGlyphs" stroke="#222" stroke-width=".3">(F) - Final bill</text>
<text x="2203.4" y="1803.6" font-size="16.8" fill="#222" font-family="Liberation Sans, sans-serif" textLength="215.8" lengthAdjust="spacingAndGlyphs" stroke="#222" stroke-width=".3">(N1) - Meter data not ready for billing</text>
<text x="2203.4" y="1826.2" font-size="16.8" fill="#222" font-family="Liberation Sans, sans-serif" textLength="312.8" lengthAdjust="spacingAndGlyphs" stroke="#222" stroke-width=".3">(N2) - Non-billing month of bi-monthly billing accounts</text>
<text x="2203.4" y="1849.8" font-size="16.8" fill="#222" font-family="Liberation Sans, sans-serif" textLength="170.6" lengthAdjust="spacingAndGlyphs" stroke="#222" stroke-width=".3">(N3) - Application in progress</text>
<text x="2203.4" y="1874.2" font-size="16.8" fill="#222" font-family="Liberation Sans, sans-serif" textLength="76.0" lengthAdjust="spacingAndGlyphs" stroke="#222" stroke-width=".3">(N4) - Others</text>
<path d="M2908.400 920.600H3052A143.400 185 0 0 1 3195.400 1105.600V1204A143.400 185 0 0 1 3052 1389A143.600 185 0 0 1 2908.400 1204Z" fill="#76b535" stroke="#4f8a26" stroke-width="1.500"/>
<path d="M3051.700 932.100A130.300 172 0 0 1 3182 1104V1204A130.300 172 0 0 1 3051.700 1376A130.300 172 0 0 1 2921.400 1204V1104A130.300 172 0 0 1 3051.700 932.100Z" fill="#fdfde8" stroke="#5a9430" stroke-width="1.200"/>
<text x="2995.0" y="1007.9" font-size="25.5" fill="#161616" font-family="Liberation Sans, sans-serif" textLength="114.6" lengthAdjust="spacingAndGlyphs" stroke="#161616" stroke-width=".3">Total Amount</text>
<text x="2954.1" y="1080.2" font-size="43.5" fill="#161616" font-family="Liberation Sans, sans-serif" textLength="195.1" lengthAdjust="spacingAndGlyphs" font-weight="700" stroke="#161616" stroke-width=".3">$116,610.99</text>
<text x="3010.5" y="1146.1" font-size="25.5" fill="#161616" font-family="Liberation Sans, sans-serif" textLength="81.9" lengthAdjust="spacingAndGlyphs" stroke="#161616" stroke-width=".3">Due Date</text>
<text x="2987.7" y="1195.7" font-size="38" fill="#161616" font-family="Liberation Sans, sans-serif" textLength="124.0" lengthAdjust="spacingAndGlyphs" stroke="#161616" stroke-width=".3">21-05-21</text>
<text x="2909.7" y="1425.2" font-size="16.5" fill="#222" font-family="Liberation Sans, sans-serif" textLength="261.2" lengthAdjust="spacingAndGlyphs" stroke="#222" stroke-width=".3">Payment after the due date will be subject</text>
<text x="2909.7" y="1445.4" font-size="16.5" fill="#222" font-family="Liberation Sans, sans-serif" textLength="187.8" lengthAdjust="spacingAndGlyphs" stroke="#222" stroke-width=".3">to a 5% Late Payment Charge</text>
<rect x="2908.800" y="1668.600" width="287.100" height="238.400" rx="9" fill="#fdfde8" stroke="#7a7a70" stroke-width="2.200"/>
<text x="2992.6" y="1710.5" font-size="20.5" fill="#161616" font-family="Liberation Sans, sans-serif" textLength="112.0" lengthAdjust="spacingAndGlyphs" stroke="#161616" stroke-width=".3">FPS QR Code</text>
<path d="M2985.5 1732.2h21.5v3.9h-21.5zM3010.0 1732.2h15.4v3.9h-15.4zM3028.4 1732.2h6.2v3.9h-6.2zM3043.7 1732.2h3.2v3.9h-3.2zM3049.8 1732.2h3.2v3.9h-3.2zM3055.9 1732.2h12.3v3.9h-12.3zM3071.2 1732.2h3.2v3.9h-3.2zM3080.4 1732.2h3.2v3.9h-3.2zM3089.6 1732.2h21.5v3.9h-21.5zM2985.5 1736.0h3.2v3.9h-3.2zM3003.9 1736.0h3.2v3.9h-3.2zM3010.0 1736.0h3.2v3.9h-3.2zM3016.1 1736.0h6.2v3.9h-6.2zM3025.3 1736.0h9.3v3.9h-9.3zM3046.7 1736.0h3.2v3.9h-3.2zM3059.0 1736.0h3.2v3.9h-3.2zM3068.1 1736.0h3.2v3.9h-3.2zM3074.3 1736.0h3.2v3.9h-3.2zM3089.6 1736.0h3.2v3.9h-3.2zM3107.9 1736.0h3.2v3.9h-3.2zM2985.5 1739.9h3.2v3.9h-3.2zM2991.6 1739.9h9.3v3.9h-9.3zM3003.9 1739.9h3.2v3.9h-3.2zM3022.2 1739.9h9.3v3.9h-9.3zM3037.5 1739.9h15.4v3.9h-15.4zM3055.9 1739.9h12.3v3.9h-12.3zM3089.6 1739.9h3.2v3.9h-3.2zM3095.7 1739.9h9.3v3.9h-9.3zM3107.9 1739.9h3.2v3.9h-3.2zM2985.5 1743.7h3.2v3.9h-3.2zM2991.6 1743.7h9.3v3.9h-9.3zM3003.9 1743.7h3.2v3.9h-3.2zM3010.0 1743.7h12.3v3.9h-12.3zM3028.4 1743.7h15.4v3.9h-15.4zM3049.8 1743.7h18.5v3.9h-18.5zM3071.2 1743.7h6.2v3.9h-6.2zM3083.5 1743.7h3.2v3.9h-3.2zM3089.6 1743.7h3.2v3.9h-3.2zM3095.7 1743.7h9.3v3.9h-9.3zM3107.9 1743.7h3.2v3.9h-3.2zM2985.5 1747.6h3.2v3.9h-3.2zM2991.6 1747.6h9.3v3.9h-9.3zM3003.9 1747.6h3.2v3.9h-3.2zM3022.2 1747.6h3.2v3.9h-3.2zM3028.4 1747.6h15.4v3.9h-15.4zM3049.8 1747.6h3.2v3.9h-3.2zM3062.0 1747.6h15.4v3.9h-15.4zM3089.6 1747.6h3.2v3.9h-3.2zM3095.7 1747.6h9.3v3.9h-9.3zM3107.9 1747.6h3.2v3.9h-3.2zM2985.5 1751.4h3.2v3.9h-3.2zM3003.9 1751.4h3.2v3.9h-3.2zM3016.1 1751.4h9.3v3.9h-9.3zM3031.4 1751.4h3.2v3.9h-3.2zM3043.7 1751.4h3.2v3.9h-3.2zM3049.8 1751.4h6.2v3.9h-6.2zM3068.1 1751.4h3.2v3.9h-3.2zM3077.3 1751.4h9.3v3.9h-9.3zM3089.6 1751.4h3.2v3.9h-3.2zM3107.9 1751.4h3.2v3.9h-3.2zM2985.5 1755.2h21.5v3.9h-21.5zM3010.0 1755.2h3.2v3.9h-3.2zM3016.1 1755.2h3.2v3.9h-3.2zM3022.2 1755.2h3.2v3.9h-3.2zM3028.4 1755.2h3.2v3.9h-3.2zM3034.5 1755.2h3.2v3.9h-3.2zM3040.6 1755.2h3.2v3.9h-3.2zM3046.7 1755.2h3.2v3.9h-3.2zM3052.8 1755.2h3.2v3.9h-3.2zM3059.0 1755.2h3.2v3.9h-3.2zM3065.1 1755.2h3.2v3.9h-3.2zM3071.2 1755.2h3.2v3.9h-3.2zM3077.3 1755.2h3.2v3.9h-3.2zM3083.5 1755.2h3.2v3.9h-3.2zM3089.6 1755.2h21.5v3.9h-21.5zM3010.0 1759.1h6.2v3.9h-6.2zM3025.3 1759.1h3.2v3.9h-3.2zM3034.5 1759.1h3.2v3.9h-3.2zM3043.7 1759.1h3.2v3.9h-3.2zM3049.8 1759.1h6.2v3.9h-6.2zM3062.0 1759.1h6.2v3.9h-6.2zM3071.2 1759.1h9.3v3.9h-9.3zM3083.5 1759.1h3.2v3.9h-3.2zM2991.6 1762.9h9.3v3.9h-9.3zM3003.9 1762.9h9.3v3.9h-9.3zM3019.2 1762.9h6.2v3.9h-6.2zM3034.5 1762.9h6.2v3.9h-6.2zM3043.7 1762.9h6.2v3.9h-6.2zM3059.0 1762.9h3.2v3.9h-3.2zM3065.1 1762.9h3.2v3.9h-3.2zM3071.2 1762.9h6.2v3.9h-6.2zM3083.5 1762.9h6.2v3.9h-6.2zM3092.6 1762.9h18.5v3.9h-18.5zM2985.5 1766.8h3.2v3.9h-3.2zM2991.6 1766.8h3.2v3.9h-3.2zM2997.7 1766.8h6.2v3.9h-6.2zM3006.9 1766.8h6.2v3.9h-6.2zM3019.2 1766.8h6.2v3.9h-6.2zM3028.4 1766.8h3.2v3.9h-3.2zM3034.5 1766.8h6.2v3.9h-6.2zM3043.7 1766.8h3.2v3.9h-3.2zM3055.9 1766.8h3.2v3.9h-3.2zM3068.1 1766.8h15.4v3.9h-15.4zM3086.5 1766.8h9.3v3.9h-9.3zM3104.9 1766.8h6.2v3.9h-6.2zM2985.5 1770.6h15.4v3.9h-15.4zM3003.9 1770.6h3.2v3.9h-3.2zM3010.0 1770.6h3.2v3.9h-3.2zM3016.1 1770.6h15.4v3.9h-15.4zM3034.5 1770.6h3.2v3.9h-3.2zM3040.6 1770.6h24.6v3.9h-24.6zM3083.5 1770.6h6.2v3.9h-6.2zM3092.6 1770.6h3.2v3.9h-3.2zM3101.8 1770.6h3.2v3.9h-3.2zM2994.7 1774.4h3.2v3.9h-3.2zM3025.3 1774.4h15.4v3.9h-15.4zM3055.9 1774.4h6.2v3.9h-6.2zM3077.3 1774.4h3.2v3.9h-3.2zM3083.5 1774.4h9.3v3.9h-9.3zM3095.7 1774.4h3.2v3.9h-3.2zM3104.9 1774.4h6.2v3.9h-6.2zM2985.5 1778.3h3.2v3.9h-3.2zM3000.8 1778.3h9.3v3.9h-9.3zM3013.0 1778.3h3.2v3.9h-3.2zM3019.2 1778.3h9.3v3.9h-9.3zM3037.5 1778.3h3.2v3.9h-3.2zM3043.7 1778.3h9.3v3.9h-9.3zM3055.9 1778.3h3.2v3.9h-3.2zM3065.1 1778.3h6.2v3.9h-6.2zM3077.3 1778.3h9.3v3.9h-9.3zM3089.6 1778.3h3.2v3.9h-3.2zM3095.7 1778.3h3.2v3.9h-3.2zM3104.9 1778.3h3.2v3.9h-3.2zM2994.7 1782.1h3.2v3.9h-3.2zM3000.8 1782.1h3.2v3.9h-3.2zM3006.9 1782.1h21.5v3.9h-21.5zM3031.4 1782.1h3.2v3.9h-3.2zM3040.6 1782.1h3.2v3.9h-3.2zM3052.8 1782.1h9.3v3.9h-9.3zM3068.1 1782.1h15.4v3.9h-15.4zM3086.5 1782.1h3.2v3.9h-3.2zM3092.6 1782.1h6.2v3.9h-6.2zM3101.8 1782.1h6.2v3.9h-6.2zM3003.9 1785.9h6.2v3.9h-6.2zM3013.0 1785.9h3.2v3.9h-3.2zM3022.2 1785.9h6.2v3.9h-6.2zM3031.4 1785.9h12.3v3.9h-12.3zM3049.8 1785.9h3.2v3.9h-3.2zM3055.9 1785.9h3.2v3.9h-3.2zM3062.0 1785.9h12.3v3.9h-12.3zM3077.3 1785.9h6.2v3.9h-6.2zM3089.6 1785.9h21.5v3.9h-21.5zM2985.5 1789.8h3.2v3.9h-3.2zM2997.7 1789.8h6.2v3.9h-6.2zM3006.9 1789.8h12.3v3.9h-12.3zM3022.2 1789.8h3.2v3.9h-3.2zM3034.5 1789.8h15.4v3.9h-15.4zM3059.0 1789.8h6.2v3.9h-6.2zM3071.2 1789.8h3.2v3.9h-3.2zM3077.3 1789.8h6.2v3.9h-6.2zM3095.7 1789.8h9.3v3.9h-9.3zM2997.7 1793.6h3.2v3.9h-3.2zM3003.9 1793.6h3.2v3.9h-3.2zM3010.0 1793.6h3.2v3.9h-3.2zM3019.2 1793.6h9.3v3.9h-9.3zM3034.5 1793.6h6.2v3.9h-6.2zM3046.7 1793.6h6.2v3.9h-6.2zM3055.9 1793.6h9.3v3.9h-9.3zM3074.3 1793.6h9.3v3.9h-9.3zM3089.6 1793.6h9.3v3.9h-9.3zM3101.8 1793.6h6.2v3.9h-6.2zM2988.6 1797.5h12.3v3.9h-12.3zM3016.1 1797.5h3.2v3.9h-3.2zM3022.2 1797.5h3.2v3.9h-3.2zM3028.4 1797.5h6.2v3.9h-6.2zM3037.5 1797.5h3.2v3.9h-3.2zM3043.7 1797.5h12.3v3.9h-12.3zM3062.0 1797.5h9.3v3.9h-9.3zM3074.3 1797.5h12.3v3.9h-12.3zM3101.8 1797.5h6.2v3.9h-6.2zM2988.6 1801.3h3.2v3.9h-3.2zM2994.7 1801.3h21.5v3.9h-21.5zM3019.2 1801.3h3.2v3.9h-3.2zM3025.3 1801.3h6.2v3.9h-6.2zM3037.5 1801.3h12.3v3.9h-12.3zM3052.8 1801.3h6.2v3.9h-6.2zM3062.0 1801.3h6.2v3.9h-6.2zM3074.3 1801.3h9.3v3.9h-9.3zM3086.5 1801.3h3.2v3.9h-3.2zM3095.7 1801.3h6.2v3.9h-6.2zM3107.9 1801.3h3.2v3.9h-3.2zM2988.6 1805.1h9.3v3.9h-9.3zM3010.0 1805.1h9.3v3.9h-9.3zM3025.3 1805.1h12.3v3.9h-12.3zM3040.6 1805.1h3.2v3.9h-3.2zM3059.0 1805.1h9.3v3.9h-9.3zM3071.2 1805.1h6.2v3.9h-6.2zM3080.4 1805.1h9.3v3.9h-9.3zM3092.6 1805.1h3.2v3.9h-3.2zM3104.9 1805.1h6.2v3.9h-6.2zM2985.5 1809.0h6.2v3.9h-6.2zM2994.7 1809.0h12.3v3.9h-12.3zM3019.2 1809.0h3.2v3.9h-3.2zM3025.3 1809.0h3.2v3.9h-3.2zM3031.4 1809.0h3.2v3.9h-3.2zM3037.5 1809.0h12.3v3.9h-12.3zM3055.9 1809.0h6.2v3.9h-6.2zM3068.1 1809.0h3.2v3.9h-3.2zM3080.4 1809.0h6.2v3.9h-6.2zM3095.7 1809.0h12.3v3.9h-12.3zM2991.6 1812.8h3.2v3.9h-3.2zM2997.7 1812.8h6.2v3.9h-6.2zM3010.0 1812.8h3.2v3.9h-3.2zM3019.2 1812.8h15.4v3.9h-15.4zM3040.6 1812.8h9.3v3.9h-9.3zM3052.8 1812.8h9.3v3.9h-9.3zM3068.1 1812.8h9.3v3.9h-9.3zM3083.5 1812.8h6.2v3.9h-6.2zM3092.6 1812.8h9.3v3.9h-9.3zM3104.9 1812.8h3.2v3.9h-3.2zM2985.5 1816.7h6.2v3.9h-6.2zM2997.7 1816.7h15.4v3.9h-15.4zM3016.1 1816.7h3.2v3.9h-3.2zM3022.2 1816.7h3.2v3.9h-3.2zM3028.4 1816.7h9.3v3.9h-9.3zM3046.7 1816.7h3.2v3.9h-3.2zM3052.8 1816.7h3.2v3.9h-3.2zM3059.0 1816.7h6.2v3.9h-6.2zM3071.2 1816.7h6.2v3.9h-6.2zM3083.5 1816.7h6.2v3.9h-6.2zM3095.7 1816.7h6.2v3.9h-6.2zM3104.9 1816.7h3.2v3.9h-3.2zM2991.6 1820.5h3.2v3.9h-3.2zM2997.7 1820.5h6.2v3.9h-6.2zM3010.0 1820.5h9.3v3.9h-9.3zM3022.2 1820.5h9.3v3.9h-9.3zM3037.5 1820.5h3.2v3.9h-3.2zM3046.7 1820.5h3.2v3.9h-3.2zM3052.8 1820.5h3.2v3.9h-3.2zM3065.1 1820.5h6.2v3.9h-6.2zM3074.3 1820.5h3.2v3.9h-3.2zM3080.4 1820.5h9.3v3.9h-9.3zM3092.6 1820.5h6.2v3.9h-6.2zM3104.9 1820.5h6.2v3.9h-6.2zM2985.5 1824.3h24.6v3.9h-24.6zM3013.0 1824.3h3.2v3.9h-3.2zM3025.3 1824.3h3.2v3.9h-3.2zM3031.4 1824.3h3.2v3.9h-3.2zM3037.5 1824.3h3.2v3.9h-3.2zM3052.8 1824.3h3.2v3.9h-3.2zM3059.0 1824.3h3.2v3.9h-3.2zM3068.1 1824.3h3.2v3.9h-3.2zM3077.3 1824.3h6.2v3.9h-6.2zM3086.5 1824.3h3.2v3.9h-3.2zM3092.6 1824.3h3.2v3.9h-3.2zM3098.8 1824.3h3.2v3.9h-3.2zM3107.9 1824.3h3.2v3.9h-3.2zM2985.5 1828.2h3.2v3.9h-3.2zM2991.6 1828.2h12.3v3.9h-12.3zM3013.0 1828.2h3.2v3.9h-3.2zM3019.2 1828.2h3.2v3.9h-3.2zM3028.4 1828.2h3.2v3.9h-3.2zM3043.7 1828.2h3.2v3.9h-3.2zM3052.8 1828.2h3.2v3.9h-3.2zM3059.0 1828.2h3.2v3.9h-3.2zM3068.1 1828.2h3.2v3.9h-3.2zM3074.3 1828.2h6.2v3.9h-6.2zM3083.5 1828.2h3.2v3.9h-3.2zM3089.6 1828.2h3.2v3.9h-3.2zM3104.9 1828.2h6.2v3.9h-6.2zM2985.5 1832.0h6.2v3.9h-6.2zM2994.7 1832.0h3.2v3.9h-3.2zM3003.9 1832.0h6.2v3.9h-6.2zM3013.0 1832.0h18.5v3.9h-18.5zM3037.5 1832.0h3.2v3.9h-3.2zM3043.7 1832.0h6.2v3.9h-6.2zM3052.8 1832.0h9.3v3.9h-9.3zM3071.2 1832.0h9.3v3.9h-9.3zM3086.5 1832.0h3.2v3.9h-3.2zM3092.6 1832.0h3.2v3.9h-3.2zM3101.8 1832.0h3.2v3.9h-3.2zM3107.9 1832.0h3.2v3.9h-3.2zM2988.6 1835.9h9.3v3.9h-9.3zM3000.8 1835.9h3.2v3.9h-3.2zM3010.0 1835.9h6.2v3.9h-6.2zM3028.4 1835.9h12.3v3.9h-12.3zM3049.8 1835.9h3.2v3.9h-3.2zM3059.0 1835.9h3.2v3.9h-3.2zM3065.1 1835.9h18.5v3.9h-18.5zM3095.7 1835.9h3.2v3.9h-3.2zM3101.8 1835.9h3.2v3.9h-3.2zM2985.5 1839.7h3.2v3.9h-3.2zM2994.7 1839.7h3.2v3.9h-3.2zM3000.8 1839.7h9.3v3.9h-9.3zM3019.2 1839.7h3.2v3.9h-3.2zM3025.3 1839.7h6.2v3.9h-6.2zM3046.7 1839.7h3.2v3.9h-3.2zM3059.0 1839.7h3.2v3.9h-3.2zM3068.1 1839.7h6.2v3.9h-6.2zM3077.3 1839.7h3.2v3.9h-3.2zM3083.5 1839.7h9.3v3.9h-9.3zM3095.7 1839.7h12.3v3.9h-12.3zM2994.7 1843.5h3.2v3.9h-3.2zM3000.8 1843.5h3.2v3.9h-3.2zM3013.0 1843.5h3.2v3.9h-3.2zM3025.3 1843.5h12.3v3.9h-12.3zM3052.8 1843.5h9.3v3.9h-9.3zM3065.1 1843.5h18.5v3.9h-18.5zM3086.5 1843.5h6.2v3.9h-6.2zM3104.9 1843.5h6.2v3.9h-6.2zM2985.5 1847.4h3.2v3.9h-3.2zM2991.6 1847.4h3.2v3.9h-3.2zM3000.8 1847.4h9.3v3.9h-9.3zM3013.0 1847.4h9.3v3.9h-9.3zM3028.4 1847.4h9.3v3.9h-9.3zM3040.6 1847.4h9.3v3.9h-9.3zM3052.8 1847.4h3.2v3.9h-3.2zM3059.0 1847.4h6.2v3.9h-6.2zM3068.1 1847.4h6.2v3.9h-6.2zM3077.3 1847.4h3.2v3.9h-3.2zM3092.6 1847.4h9.3v3.9h-9.3zM3104.9 1847.4h3.2v3.9h-3.2zM2985.5 1851.2h9.3v3.9h-9.3zM3000.8 1851.2h3.2v3.9h-3.2zM3006.9 1851.2h6.2v3.9h-6.2zM3025.3 1851.2h9.3v3.9h-9.3zM3043.7 1851.2h6.2v3.9h-6.2zM3055.9 1851.2h6.2v3.9h-6.2zM3065.1 1851.2h9.3v3.9h-9.3zM3080.4 1851.2h12.3v3.9h-12.3zM3095.7 1851.2h9.3v3.9h-9.3zM2985.5 1855.0h3.2v3.9h-3.2zM2991.6 1855.0h6.2v3.9h-6.2zM3003.9 1855.0h9.3v3.9h-9.3zM3016.1 1855.0h15.4v3.9h-15.4zM3043.7 1855.0h6.2v3.9h-6.2zM3052.8 1855.0h3.2v3.9h-3.2zM3062.0 1855.0h3.2v3.9h-3.2zM3071.2 1855.0h6.2v3.9h-6.2zM3083.5 1855.0h21.5v3.9h-21.5zM3107.9 1855.0h3.2v3.9h-3.2zM3010.0 1858.9h3.2v3.9h-3.2zM3019.2 1858.9h3.2v3.9h-3.2zM3028.4 1858.9h6.2v3.9h-6.2zM3037.5 1858.9h3.2v3.9h-3.2zM3043.7 1858.9h3.2v3.9h-3.2zM3055.9 1858.9h3.2v3.9h-3.2zM3080.4 1858.9h6.2v3.9h-6.2zM3095.7 1858.9h6.2v3.9h-6.2zM3104.9 1858.9h6.2v3.9h-6.2zM2985.5 1862.7h21.5v3.9h-21.5zM3010.0 1862.7h3.2v3.9h-3.2zM3022.2 1862.7h3.2v3.9h-3.2zM3028.4 1862.7h9.3v3.9h-9.3zM3046.7 1862.7h3.2v3.9h-3.2zM3052.8 1862.7h3.2v3.9h-3.2zM3059.0 1862.7h3.2v3.9h-3.2zM3071.2 1862.7h6.2v3.9h-6.2zM3080.4 1862.7h6.2v3.9h-6.2zM3089.6 1862.7h3.2v3.9h-3.2zM3095.7 1862.7h15.4v3.9h-15.4zM2985.5 1866.6h3.2v3.9h-3.2zM3003.9 1866.6h3.2v3.9h-3.2zM3010.0 1866.6h3.2v3.9h-3.2zM3019.2 1866.6h3.2v3.9h-3.2zM3031.4 1866.6h3.2v3.9h-3.2zM3040.6 1866.6h6.2v3.9h-6.2zM3052.8 1866.6h12.3v3.9h-12.3zM3068.1 1866.6h6.2v3.9h-6.2zM3080.4 1866.6h6.2v3.9h-6.2zM3095.7 1866.6h3.2v3.9h-3.2zM3104.9 1866.6h3.2v3.9h-3.2zM2985.5 1870.4h3.2v3.9h-3.2zM2991.6 1870.4h9.3v3.9h-9.3zM3003.9 1870.4h3.2v3.9h-3.2zM3010.0 1870.4h18.5v3.9h-18.5zM3034.5 1870.4h3.2v3.9h-3.2zM3040.6 1870.4h3.2v3.9h-3.2zM3052.8 1870.4h6.2v3.9h-6.2zM3062.0 1870.4h3.2v3.9h-3.2zM3071.2 1870.4h3.2v3.9h-3.2zM3083.5 1870.4h18.5v3.9h-18.5zM3107.9 1870.4h3.2v3.9h-3.2zM2985.5 1874.2h3.2v3.9h-3.2zM2991.6 1874.2h9.3v3.9h-9.3zM3003.9 1874.2h3.2v3.9h-3.2zM3016.1 1874.2h3.2v3.9h-3.2zM3022.2 1874.2h3.2v3.9h-3.2zM3028.4 1874.2h3.2v3.9h-3.2zM3043.7 1874.2h9.3v3.9h-9.3zM3062.0 1874.2h3.2v3.9h-3.2zM3074.3 1874.2h12.3v3.9h-12.3zM2985.5 1878.1h3.2v3.9h-3.2zM2991.6 1878.1h9.3v3.9h-9.3zM3003.9 1878.1h3.2v3.9h-3.2zM3010.0 1878.1h6.2v3.9h-6.2zM3025.3 1878.1h3.2v3.9h-3.2zM3037.5 1878.1h15.4v3.9h-15.4zM3059.0 1878.1h3.2v3.9h-3.2zM3065.1 1878.1h6.2v3.9h-6.2zM3080.4 1878.1h9.3v3.9h-9.3zM3098.8 1878.1h9.3v3.9h-9.3zM2985.5 1881.9h3.2v3.9h-3.2zM3003.9 1881.9h3.2v3.9h-3.2zM3013.0 1881.9h6.2v3.9h-6.2zM3022.2 1881.9h3.2v3.9h-3.2zM3028.4 1881.9h6.2v3.9h-6.2zM3046.7 1881.9h3.2v3.9h-3.2zM3055.9 1881.9h3.2v3.9h-3.2zM3062.0 1881.9h3.2v3.9h-3.2zM3071.2 1881.9h6.2v3.9h-6.2zM3083.5 1881.9h6.2v3.9h-6.2zM3092.6 1881.9h3.2v3.9h-3.2zM3098.8 1881.9h9.3v3.9h-9.3zM2985.5 1885.8h21.5v3.9h-21.5zM3010.0 1885.8h3.2v3.9h-3.2zM3025.3 1885.8h6.2v3.9h-6.2zM3040.6 1885.8h3.2v3.9h-3.2zM3055.9 1885.8h6.2v3.9h-6.2zM3065.1 1885.8h3.2v3.9h-3.2zM3080.4 1885.8h12.3v3.9h-12.3zM3101.8 1885.8h3.2v3.9h-3.2z" fill="#111"/></svg>
</body></html>
